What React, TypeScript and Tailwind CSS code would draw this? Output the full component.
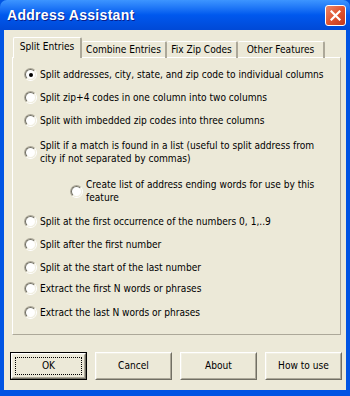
import React from 'react';

const tabs = [
  { label: 'Split Entries', w: 'w-[69px]' },
  { label: 'Combine Entries', w: 'w-[85px]' },
  { label: 'Fix Zip Codes', w: 'w-[71px]' },
  { label: 'Other Features', w: 'w-[87px]' },
];

function Radio({ checked = false }: { checked?: boolean }) {
  return (
    <span className="w-[13px] h-[13px] shrink-0 rounded-full border border-t-[#aca899] border-l-[#aca899] border-b-white border-r-white">
      <span className="w-full h-full rounded-full border border-t-[#716f64] border-l-[#716f64] border-b-[#f1efe2] border-r-[#f1efe2] bg-white flex items-center justify-center">
        {checked && <span className="w-[4px] h-[4px] rounded-full bg-black" />}
      </span>
    </span>
  );
}

function Option({ label, checked, className = '' }: { label: React.ReactNode; checked?: boolean; className?: string }) {
  return (
    <div className={`flex items-center gap-[3px] ${className}`}>
      <Radio checked={checked} />
      <span className="leading-[13px] whitespace-nowrap">{label}</span>
    </div>
  );
}

function XpButton({ label, isDefault = false }: { label: string; isDefault?: boolean }) {
  return (
    <div className={`w-[77px] h-[28px] ${isDefault ? 'border border-black' : ''}`}>
      <div className="w-full h-full border border-t-white border-l-white border-b-[#716f64] border-r-[#716f64]">
        <div className="w-full h-full border border-t-[#f1efe2] border-l-[#f1efe2] border-b-[#aca899] border-r-[#aca899] flex items-center justify-center">
          {isDefault ? (
            <div className="w-[calc(100%-4px)] h-[calc(100%-4px)] border border-dotted border-black flex items-center justify-center">
              {label}
            </div>
          ) : (
            label
          )}
        </div>
      </div>
    </div>
  );
}

export default function App() {
  return (
    <div
      className="w-[350px] h-[396px] flex flex-col bg-[#0054e3] text-[10.1px] text-black"
      style={{ fontFamily: '"DejaVu Sans Condensed", "Liberation Sans", Arial, sans-serif' }}
    >
      {/* Title bar */}
      <div className="h-[30px] shrink-0 flex items-center justify-between pl-[7px] pr-[4px] bg-gradient-to-b from-[#3d95ff] via-[#0058ee] to-[#0049d6] rounded-t-[7px]">
        <span
          className="text-white font-bold text-[14px] tracking-[0.3px] [text-shadow:1px_1px_0_#0a1e8c]"
          style={{ fontFamily: '"Liberation Sans", Arial, sans-serif' }}
        >
          Address Assistant
        </span>
        <div className="w-[21px] h-[21px] rounded-[3px] border border-white bg-gradient-to-br from-[#e9866b] via-[#e0542f] to-[#c4381c] flex items-center justify-center">
          <svg width="11" height="11" viewBox="0 0 11 11">
            <path d="M1.5 1.5 L9.5 9.5 M9.5 1.5 L1.5 9.5" stroke="white" strokeWidth="2.2" strokeLinecap="square" />
          </svg>
        </div>
      </div>

      {/* Body */}
      <div className="flex-1 mx-[4px] mb-[6px] bg-[#ece9d8] pt-[7px] pl-[8px] flex flex-col">
        {/* Tabs */}
        <div className="flex items-end ml-[1px] h-[21px] relative z-10">
          {tabs.map((t, i) =>
            i === 0 ? (
              <div
                key={t.label}
                className={`${t.w} h-[21px] pb-[3px] flex items-center justify-center whitespace-nowrap bg-[#ece9d8] border-t border-l border-white border-r-2 border-r-[#aca899] rounded-t-[2px]`}
              >
                {t.label}
              </div>
            ) : (
              <div
                key={t.label}
                className={`${t.w} h-[17px] flex items-center justify-center whitespace-nowrap border-t border-white border-r-2 border-r-[#aca899] rounded-t-[2px]`}
              >
                {t.label}
              </div>
            )
          )}
        </div>

        {/* Panel */}
        <div className="h-[278px] -mt-[1px] w-[329px] border-t border-l border-white border-r border-b border-r-[#aca899] border-b-[#aca899] pl-[11px] pt-[10px]">
          <Option label="Split addresses, city, state, and zip code to individual columns" checked />
          <Option className="mt-[10px]" label="Split zip+4 codes in one column into two columns" />
          <Option className="mt-[10px]" label="Split with imbedded zip codes into three columns" />
          <Option
            className="mt-[12px]"
            label={
              <>
                Split if a match is found in a list (useful to split address from
                <br />
                city if not separated by commas)
              </>
            }
          />
          <Option
            className="mt-[13px] ml-[46px]"
            label={
              <>
                Create list of address ending words for use by this
                <br />
                feature
              </>
            }
          />
          <Option className="mt-[11px]" label="Split at the first occurrence of the numbers 0, 1,..9" />
          <Option className="mt-[10px]" label="Split after the first number" />
          <Option className="mt-[10px]" label="Split at the start of the last number" />
          <Option className="mt-[8px]" label="Extract the first N words or phrases" />
          <Option className="mt-[11px]" label="Extract the last N words or phrases" />
        </div>

        {/* Buttons */}
        <div className="flex gap-[8px] mt-[17px] -ml-[2px]">
          <XpButton label="OK" isDefault />
          <XpButton label="Cancel" />
          <XpButton label="About" />
          <XpButton label="How to use" />
        </div>
      </div>
    </div>
  );
}
